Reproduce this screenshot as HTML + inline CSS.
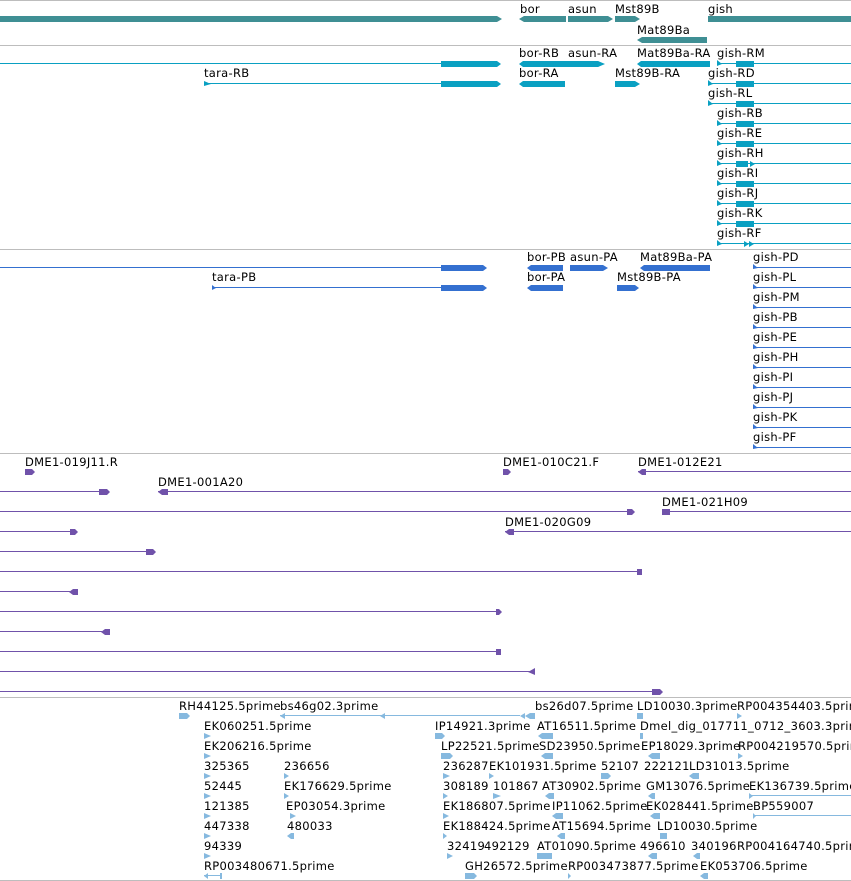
<!DOCTYPE html>
<html><head><meta charset="utf-8"><style>
html,body{margin:0;padding:0;background:#fff;}
svg{display:block;}
text{font-family:"DejaVu Sans","Liberation Sans",sans-serif;font-size:11.5px;letter-spacing:0.3px;fill:#000;}
</style></head><body>
<svg width="851" height="881" viewBox="0 0 851 881" xmlns="http://www.w3.org/2000/svg">
<g fill="#bdbdbd">
<rect x="0" y="0" width="851" height="1"/>
<rect x="0" y="45" width="851" height="1"/>
<rect x="0" y="249" width="851" height="1"/>
<rect x="0" y="453" width="851" height="1"/>
<rect x="0" y="697" width="851" height="1"/>
<rect x="0" y="880" width="851" height="1"/>
</g>

<g fill="#3f8f94">
<path d="M0 16H497L502 19L497 22H0Z"/>
<path d="M519 19L524 16H566V22H524Z"/>
<path d="M568 16H608L613 19L608 22H568Z"/>
<path d="M615 16H635L640 19L635 22H615Z"/>
<rect x="708" y="16" width="143" height="6"/>
<path d="M637 40L642 37H707V43H642Z"/>
</g>
<text x="520" y="13">bor</text><text x="568" y="13">asun</text><text x="615" y="13">Mst89B</text><text x="708" y="13">gish</text>
<text x="637" y="34">Mat89Ba</text>

<g fill="#0aa0c2">
<rect x="0" y="63" width="441" height="1"/>
<path d="M441 61H497L501 64L497 67H441Z"/>
<rect x="204" y="83" width="237" height="1"/><path d="M204 81L211 84L204 86Z"/>
<path d="M441 81H497L501 84L497 87H441Z"/>
<path d="M519 64L523 61H565V67H523Z"/><path d="M519 84L523 81H565V87H523Z"/>
<path d="M565 61H598L602 64L598 67H565Z"/><path d="M598 61L605 64L598 67Z"/>
<path d="M637 64L641 61H710V67H641Z"/>
<path d="M615 81H635L640 84L635 87H615Z"/>
<rect x="717" y="63" width="134" height="1"/><path d="M717 60L722 64L717 66Z"/><rect x="736" y="61" width="18" height="6"/>
<rect x="708" y="83" width="143" height="1"/><path d="M708 80L713 84L708 86Z"/><rect x="736" y="81" width="18" height="6"/>
<rect x="708" y="103" width="143" height="1"/><path d="M708 100L713 104L708 106Z"/><rect x="736" y="101" width="18" height="6"/>
<rect x="717" y="123" width="134" height="1"/><path d="M717 120L722 124L717 126Z"/><rect x="736" y="121" width="18" height="6"/>
<rect x="717" y="143" width="134" height="1"/><path d="M717 140L722 144L717 146Z"/><rect x="736" y="141" width="18" height="6"/>
<rect x="717" y="163" width="134" height="1"/><path d="M717 160L722 164L717 166Z"/><rect x="736" y="161" width="12" height="6"/><path d="M750 161L755 164L750 167Z"/>
<rect x="717" y="183" width="134" height="1"/><path d="M717 180L722 184L717 186Z"/><rect x="736" y="181" width="18" height="6"/>
<rect x="717" y="203" width="134" height="1"/><path d="M717 200L722 204L717 206Z"/><rect x="736" y="201" width="18" height="6"/>
<rect x="717" y="223" width="134" height="1"/><path d="M717 220L722 224L717 226Z"/><rect x="736" y="221" width="18" height="6"/>
<rect x="717" y="243" width="134" height="1"/><path d="M717 240L722 244L717 246Z"/><path d="M744 241L749 244L744 247Z"/><path d="M749 241L754 244L749 247Z"/>
</g>
<text x="519" y="57">bor-RB</text><text x="568" y="57">asun-RA</text><text x="637" y="57">Mat89Ba-RA</text><text x="717" y="57">gish-RM</text>
<text x="204" y="77">tara-RB</text><text x="519" y="77">bor-RA</text><text x="615" y="77">Mst89B-RA</text><text x="708" y="77">gish-RD</text>
<text x="708" y="97">gish-RL</text>
<text x="717" y="117">gish-RB</text><text x="717" y="137">gish-RE</text><text x="717" y="157">gish-RH</text><text x="717" y="177">gish-RI</text>
<text x="717" y="197">gish-RJ</text><text x="717" y="217">gish-RK</text><text x="717" y="237">gish-RF</text>

<g fill="#3470d0">
<rect x="0" y="267" width="441" height="1"/><path d="M441 265H483L487 268L483 271H441Z"/>
<rect x="212" y="287" width="229" height="1"/><path d="M212 285L216 288L212 290Z"/><path d="M441 285H483L487 288L483 291H441Z"/>
<path d="M527 268L531 265H563V271H531Z"/><path d="M527 288L531 285H563V291H531Z"/>
<path d="M570 265H603L608 268L603 271H570Z"/>
<path d="M640 268L644 265H710V271H644Z"/>
<path d="M617 285H635L639 288L635 291H617Z"/>
<rect x="753" y="267" width="98" height="1"/><rect x="753" y="287" width="98" height="1"/><rect x="753" y="307" width="98" height="1"/>
<rect x="753" y="327" width="98" height="1"/><rect x="753" y="347" width="98" height="1"/><rect x="753" y="367" width="98" height="1"/>
<rect x="753" y="387" width="98" height="1"/><rect x="753" y="407" width="98" height="1"/><rect x="753" y="427" width="98" height="1"/>
<rect x="753" y="447" width="98" height="1"/>
<path d="M753 264L758 268L753 269Z"/><path d="M753 284L758 288L753 289Z"/><path d="M753 304L758 308L753 309Z"/><path d="M753 324L758 328L753 329Z"/><path d="M753 344L758 348L753 349Z"/><path d="M753 364L758 368L753 369Z"/><path d="M753 384L758 388L753 389Z"/><path d="M753 404L758 408L753 409Z"/><path d="M753 424L758 428L753 429Z"/><path d="M753 444L758 448L753 449Z"/>
</g>
<text x="212" y="281">tara-PB</text>
<text x="527" y="261">bor-PB</text><text x="570" y="261">asun-PA</text><text x="640" y="261">Mat89Ba-PA</text>
<text x="527" y="281">bor-PA</text><text x="617" y="281">Mst89B-PA</text>
<text x="753" y="261">gish-PD</text><text x="753" y="281">gish-PL</text><text x="753" y="301">gish-PM</text><text x="753" y="321">gish-PB</text>
<text x="753" y="341">gish-PE</text><text x="753" y="361">gish-PH</text><text x="753" y="381">gish-PI</text><text x="753" y="401">gish-PJ</text>
<text x="753" y="421">gish-PK</text><text x="753" y="441">gish-PF</text>

<g fill="#7052aa">
<path d="M25 469H32L35 472L32 475H25Z"/>
<path d="M503 469H508L511 472L508 475H503Z"/>
<rect x="638" y="471" width="213" height="1"/><path d="M638 472L642 469H646V475H642Z"/>
<rect x="0" y="491" width="100" height="1"/><path d="M99 489H107L110 492L107 495H99Z"/>
<rect x="158" y="491" width="693" height="1"/><path d="M158 492L162 489H168V495H162Z"/>
<rect x="0" y="511" width="627" height="1"/><path d="M627 509H632L635 512L632 515H627Z"/>
<rect x="662" y="511" width="189" height="1"/><path d="M662 509H670V515H662Z"/>
<rect x="0" y="531" width="72" height="1"/><path d="M70 529H75L78 532L75 535H70Z"/>
<rect x="505" y="531" width="346" height="1"/><path d="M505 532L509 529H514V535H509Z"/>
<rect x="0" y="551" width="150" height="1"/><path d="M146 549H153L156 552L153 555H146Z"/>
<rect x="0" y="571" width="638" height="1"/><path d="M637 569H642V575H637Z"/>
<rect x="0" y="591" width="70" height="1"/><path d="M69 592L73 589H78V595H73Z"/>
<rect x="0" y="611" width="497" height="1"/><path d="M496 609H499L502 612L499 615H496Z"/>
<rect x="0" y="631" width="102" height="1"/><path d="M101 632L105 629H110V635H105Z"/>
<rect x="0" y="651" width="497" height="1"/><path d="M496 649H501V655H496Z"/>
<rect x="0" y="671" width="530" height="1"/><path d="M528 672L535 668V675Z"/>
<rect x="0" y="691" width="653" height="1"/><path d="M652 689H660L663 692L660 695H652Z"/>
</g>
<text x="25" y="466">DME1-019J11.R</text><text x="503" y="466">DME1-010C21.F</text><text x="638" y="466">DME1-012E21</text>
<text x="158" y="486">DME1-001A20</text><text x="662" y="506">DME1-021H09</text><text x="505" y="526">DME1-020G09</text>

<g fill="#86b9df">
<path d="M179 713H187L190 716L187 719H179Z"/>
<rect x="280" y="715" width="240" height="1"/><path d="M280 716L285 713V719Z"/><path d="M380 716L385 713V719Z"/>
<path d="M520 716L525 713V719Z"/><path d="M525 716L530 713H535V719H530Z"/>
<path d="M637 713H643V719H637Z"/><path d="M737 713L742 716L737 719Z"/>
<path d="M204 733L211 736L204 739Z"/><path d="M435 733H442L445 736L442 739H435Z"/><path d="M538 736L542 733H553V739H542Z"/><path d="M640 733H643V739H640Z"/>
<path d="M204 753L211 756L204 759Z"/><path d="M441 753H450L453 756L450 759H441Z"/><path d="M541 756L545 753H553V759H545Z"/><path d="M648 756L652 753H660V759H652Z"/><path d="M738 753L743 756L738 759Z"/>
<path d="M204 773L211 776L204 779Z"/><path d="M284 773L289 776L284 779Z"/><path d="M443 773L450 776L443 779Z"/><path d="M489 773L494 776L489 779Z"/><path d="M601 773H608L611 776L608 779H601Z"/><path d="M689 776L693 773H699V779H693Z"/>
<path d="M204 793L211 796L204 799Z"/><path d="M284 793L289 796L284 799Z"/><path d="M443 793L448 796L443 799Z"/><path d="M493 793L501 796L493 799Z"/><path d="M545 796L549 793H554V799H549Z"/><path d="M648 796L652 793H655V799H652Z"/>
<rect x="749" y="795" width="102" height="1"/><path d="M749 793L753 796L749 799Z"/>
<path d="M204 813L211 816L204 819Z"/><path d="M290 813L296 816L290 819Z"/><path d="M443 813L449 816L443 819Z"/><path d="M552 816L556 813H563V819H556Z"/><path d="M650 816L654 813H660V819H654Z"/>
<rect x="753" y="815" width="98" height="1"/><path d="M753 813L756 816L753 819Z"/>
<path d="M204 833L211 836L204 839Z"/><path d="M287 836L291 833H294V839H291Z"/><path d="M443 833L447 836L443 839Z"/><path d="M557 836L561 833H565V839H561Z"/><path d="M660 833H667V839H660Z"/>
<path d="M204 853L211 856L204 859Z"/><path d="M447 853L453 856L447 859Z"/><path d="M537 853H552V859H537Z"/><path d="M648 856L652 853H657V859H652Z"/><path d="M693 856L697 853H700V859H697Z"/>
<rect x="204" y="875" width="18" height="1"/><path d="M204 876L208 873V879Z"/><path d="M222 873V879H220V873Z"/>
<path d="M465 873H474L477 876L474 879H465Z"/><path d="M568 873L571 876L568 879Z"/><path d="M700 876L704 873H708V879H704Z"/>
</g>
<text x="179" y="710">RH44125.5prime</text><text x="280" y="710">bs46g02.3prime</text><text x="535" y="710">bs26d07.5prime</text><text x="637" y="710">LD10030.3prime</text><text x="737" y="710">RP004354403.5prime</text>
<text x="204" y="730">EK060251.5prime</text><text x="435" y="730">IP14921.3prime</text><text x="537" y="730">AT16511.5prime</text><text x="640" y="730">Dmel_dig_017711_0712_3603.3prime</text>
<text x="204" y="750">EK206216.5prime</text><text x="441" y="750">LP22521.5prime</text><text x="539" y="750">SD23950.5prime</text><text x="641" y="750">EP18029.3prime</text><text x="738" y="750">RP004219570.5prime</text>
<text x="204" y="770">325365</text><text x="284" y="770">236656</text><text x="443" y="770">236287</text><text x="489" y="770">EK101931.5prime</text><text x="601" y="770">52107</text><text x="644" y="770">222121</text><text x="689" y="770">LD31013.5prime</text>
<text x="204" y="790">52445</text><text x="284" y="790">EK176629.5prime</text><text x="443" y="790">308189</text><text x="493" y="790">101867</text><text x="542" y="790">AT30902.5prime</text><text x="646" y="790">GM13076.5prime</text><text x="749" y="790">EK136739.5prime</text>
<text x="204" y="810">121385</text><text x="286" y="810">EP03054.3prime</text><text x="443" y="810">EK186807.5prime</text><text x="552" y="810">IP11062.5prime</text><text x="646" y="810">EK028441.5prime</text><text x="753" y="810">BP559007</text>
<text x="204" y="830">447338</text><text x="287" y="830">480033</text><text x="443" y="830">EK188424.5prime</text><text x="552" y="830">AT15694.5prime</text><text x="657" y="830">LD10030.5prime</text>
<text x="204" y="850">94339</text><text x="447" y="850">32419</text><text x="484" y="850">492129</text><text x="537" y="850">AT01090.5prime</text><text x="640" y="850">496610</text><text x="691" y="850">340196</text><text x="737" y="850">RP004164740.5prime</text>
<text x="204" y="870">RP003480671.5prime</text><text x="465" y="870">GH26572.5prime</text><text x="568" y="870">RP003473877.5prime</text><text x="700" y="870">EK053706.5prime</text>
</svg>
</body></html>
